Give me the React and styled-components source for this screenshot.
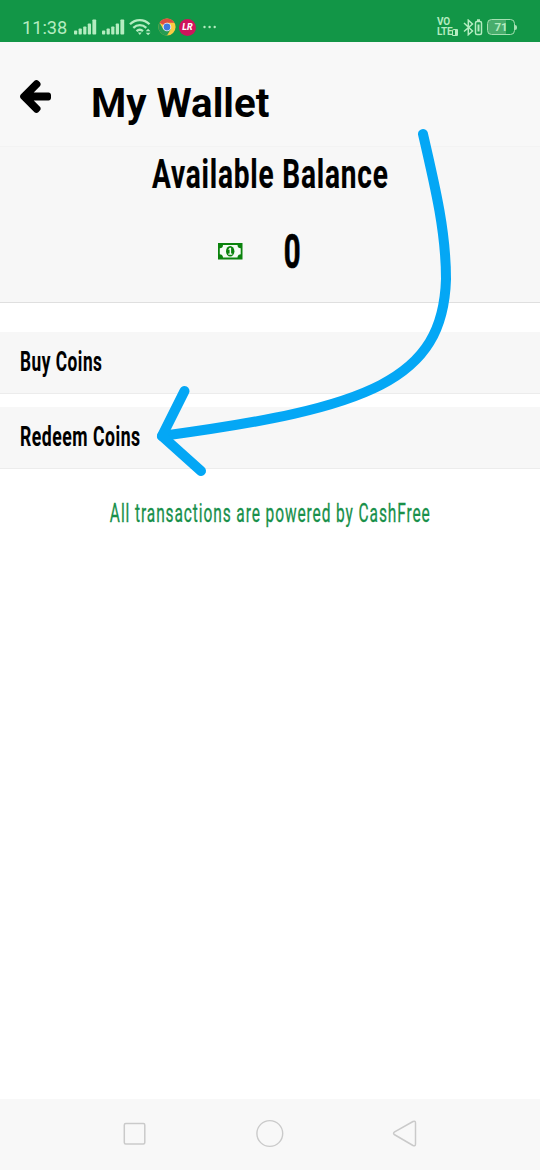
import React from 'react';
import styled, { createGlobalStyle } from 'styled-components';

const GlobalStyle = createGlobalStyle`
  * { box-sizing: border-box; }
  body { margin: 0; background: #fff; font-family: Roboto, sans-serif; color: #000; }
`;

const Screen = styled.div`
  position: relative;
  display: flex;
  flex-direction: column;
  width: 540px;
  height: 1170px;
  overflow: hidden;
  background: #fff;
`;

const StatusBar = styled.div`
  display: flex;
  align-items: flex-start;
  justify-content: space-between;
  height: 42px;
  flex: none;
  padding: 0 23px 0 22px;
  background: #129647;
  color: #b4ecc0;
`;

const StatusGroup = styled.div`
  display: flex;
  align-items: center;
  height: 20px;
  margin-top: 17px;
`;

const Clock = styled.span`
  width: 52px;
  font-size: 18.2px;
  line-height: 20px;
  padding-top: 1px;
`;

const StatusIcon = styled.svg`
  display: block;
  flex: none;
  margin-left: ${(p) => p.$gap || 0}px;
`;

const LrBadge = styled.span`
  display: flex;
  align-items: center;
  justify-content: center;
  width: 17px;
  height: 17px;
  margin-left: 3px;
  border-radius: 50%;
  background: #cf145c;
  color: #fff;
  font-size: 9px;
  font-style: italic;
  font-weight: 800;
`;

const Volte = styled.span`
  display: flex;
  flex-direction: column;
  width: 21px;
  font-size: 10px;
  font-weight: 700;
  line-height: 10px;
  letter-spacing: -0.3px;
`;

const VolteLine = styled.span`
  display: flex;
  align-items: center;
  height: 10px;
`;

const SimTag = styled.span`
  display: inline-block;
  flex: none;
  width: 6px;
  height: 7px;
  border: 1.5px solid #b4ecc0;
  border-right-width: 3px;
  border-radius: 2px 1px 1px 1px;
`;

const Battery = styled.span`
  display: flex;
  align-items: center;
  justify-content: center;
  width: 28px;
  height: 16px;
  margin-left: 4px;
  border: 1.5px solid #a5e0b2;
  border-radius: 4.5px;
  background: linear-gradient(90deg, #48ad6c 68%, transparent 68%);
  font-size: 11.5px;
  font-weight: 700;
`;

const BatteryTip = styled.span`
  width: 2px;
  height: 5px;
  border-radius: 0 2px 2px 0;
  background: #a5e0b2;
`;

const Header = styled.header`
  display: flex;
  align-items: flex-start;
  height: 105px;
  flex: none;
  padding: 38px 20px 0;
  border-bottom: 1px solid #f3f3f3;
  background: #f8f8f8;
`;

const BackIcon = styled.svg`
  display: block;
  width: 31px;
  height: 33px;
  flex: none;
`;

const Title = styled.h1`
  margin: -1px 0 0 40px;
  font-size: 41px;
  font-weight: 700;
  line-height: 48px;
  white-space: nowrap;
  transform: scaleX(0.982);
  transform-origin: left;
`;

const Condensed = styled.span`
  display: block;
  font-size: ${(p) => p.$size}px;
  font-weight: ${(p) => p.$weight || 700};
  line-height: 1;
  letter-spacing: ${(p) => p.$spacing || 0}px;
  white-space: nowrap;
  -webkit-text-stroke: ${(p) => p.$stroke || 0}px currentColor;
  transform: scaleX(${(p) => p.$scale});
  transform-origin: ${(p) => p.$origin || 'center'};
`;

const BalancePanel = styled.section`
  display: flex;
  flex-direction: column;
  align-items: center;
  height: 156px;
  flex: none;
  padding-top: 6px;
  border-bottom: 1.5px solid #dfdfdf;
  background: #f7f7f7;
`;

const BalanceRow = styled.div`
  display: flex;
  align-items: center;
  gap: 35px;
  height: 48px;
  margin-top: 33px;
  padding-right: 16px;
`;

const Menu = styled.nav`
  display: flex;
  flex-direction: column;
  gap: 13px;
  margin-top: 29px;
`;

const MenuItem = styled.div`
  display: flex;
  align-items: center;
  height: 62px;
  padding: 0 20px;
  border-bottom: 1.5px solid #ececec;
  background: #f7f7f7;
`;

const Note = styled.div`
  display: flex;
  justify-content: center;
  margin-top: 32px;
  color: #18904a;
`;

const NavBar = styled.footer`
  display: flex;
  justify-content: center;
  align-items: center;
  gap: 106px;
  height: 71px;
  margin-top: auto;
  flex: none;
  padding-bottom: 2px;
  background: #f8f8f8;
`;

const DrawnArrow = styled.svg`
  position: absolute;
  top: 120px;
  left: 140px;
  pointer-events: none;
`;

function Signal({ gap, heights }) {
  return (
    <StatusIcon $gap={gap} width="23" height="16" viewBox="0 0 23 16" fill="#b4ecc0">
      {heights.map((h, i) => (
        <rect key={i} x={i * 4.6} y={15.5 - h} width={i === heights.length - 1 ? 3.8 : 3.2} height={h} rx="0.8" />
      ))}
    </StatusIcon>
  );
}

function Wifi() {
  return (
    <StatusIcon $gap={4} width="23" height="18" viewBox="0 0 23 18" fill="none" stroke="#b4ecc0" strokeWidth="2.3">
      <path d="M1 6.2C6.5.7 15 .7 20.5 6.2M4.3 9.8c3.8-3.5 9.2-3.5 13 0M7.5 13.1c2-1.7 4.5-1.7 6.5 0" />
      <path d="M8.9 14.5h3.8L10.8 17z" fill="#b4ecc0" stroke="none" />
      <path d="M16.7 13.2l2.4-2.4 2.4 2.4zM16.7 14.7l2.4 2.5 2.4-2.5z" fill="#b4ecc0" stroke="none" />
    </StatusIcon>
  );
}

function Chrome() {
  return (
    <StatusIcon $gap={6} width="18" height="18" viewBox="0 0 18 18">
      <circle cx="9" cy="9" r="8.6" fill="#fbcb43" />
      <path d="M9 9L1.55 4.7A8.6 8.6 0 0 1 16.45 4.7H9z" fill="#dc4e41" />
      <path d="M1.55 4.7A8.6 8.6 0 0 0 9 17.6l3.8-6.5H5.2z" fill="#279b53" />
      <circle cx="9" cy="9" r="4.3" fill="#f2f5f6" />
      <circle cx="9" cy="9" r="3.4" fill="#3f79dd" />
    </StatusIcon>
  );
}

function Money() {
  return (
    <svg width="25" height="17" viewBox="0 0 25 17">
      <rect width="24.5" height="16.5" fill="#0b830d" />
      <path d="M5 2h14.5a3.4 3.4 0 0 0 3.2 3.3v5.9a3.4 3.4 0 0 0-3.2 3.3H5a3.4 3.4 0 0 0-3.2-3.3V5.3A3.4 3.4 0 0 0 5 2z" fill="#f4fbf4" />
      <ellipse cx="12.2" cy="8.3" rx="4.2" ry="5.2" fill="#0b830d" />
      <path d="M10.3 6.2l1.5-1.4h1.3v5.8h1.2v1.2h-4v-1.2h1.3V6.5l-.7.5z" fill="#f4fbf4" />
    </svg>
  );
}

export default function App() {
  return (
    <>
      <GlobalStyle />
      <Screen>
        <StatusBar>
          <StatusGroup>
            <Clock>11:38</Clock>
            <Signal heights={[4, 6, 8, 11, 15]} />
            <Signal gap={5} heights={[4, 6, 8, 11, 15]} />
            <Wifi />
            <Chrome />
            <LrBadge>LR</LrBadge>
            <StatusIcon $gap={7} width="14" height="4" viewBox="0 0 14 4" fill="#b4ecc0">
              <circle cx="1.5" cy="2" r="1.2" />
              <circle cx="6.6" cy="2" r="1.2" />
              <circle cx="11.7" cy="2" r="1.2" />
            </StatusIcon>
          </StatusGroup>
          <StatusGroup>
            <Volte>
              <VolteLine>VO</VolteLine>
              <VolteLine>LTE<SimTag /></VolteLine>
            </Volte>
            <StatusIcon $gap={5} width="20" height="17" viewBox="0 0 20 17" fill="none" stroke="#b4ecc0" strokeWidth="1.5">
              <path d="M1 4l8.5 8-4.2 3.7V1.2L9.5 5 1 12.5" />
              <rect x="12.5" y="2.5" width="6" height="13" rx="1.5" />
              <path d="M14 1.2h3M15.5 5.5v7" strokeWidth="2" />
            </StatusIcon>
            <Battery>71</Battery>
            <BatteryTip />
          </StatusGroup>
        </StatusBar>
        <Header>
          <BackIcon viewBox="64 181 1472 1558" preserveAspectRatio="none">
            <path d="M1536 896v128q0 53-32.5 90.5t-84.5 37.5h-704l293 294q38 36 38 90t-38 90l-75 76q-37 37-90 37-52 0-91-37l-651-652q-37-37-37-90 0-52 37-91l651-650q38-38 91-38 52 0 90 38l75 74q38 38 38 91t-38 91l-293 293h704q52 0 84.5 37.5t32.5 90.5z" />
          </BackIcon>
          <Title>My Wallet</Title>
        </Header>
        <BalancePanel>
          <Condensed $size={41.5} $scale={0.675} $spacing={1.2} $stroke={0.2}>Available Balance</Condensed>
          <BalanceRow>
            <Money />
            <Condensed $size={49} $scale={0.6} $stroke={0.7}>0</Condensed>
          </BalanceRow>
        </BalancePanel>
        <Menu>
          <MenuItem>
            <Condensed $size={27} $scale={0.64} $spacing={0.8} $stroke={0.1} $origin="left">Buy Coins</Condensed>
          </MenuItem>
          <MenuItem>
            <Condensed $size={27} $scale={0.652} $spacing={0.8} $stroke={0.1} $origin="left">Redeem Coins</Condensed>
          </MenuItem>
        </Menu>
        <Note>
          <Condensed $size={25.5} $scale={0.607} $weight={400} $spacing={1.5} $stroke={0.3}>
            All transactions are powered by CashFree
          </Condensed>
        </Note>
        <NavBar>
          <svg width="30" height="30" viewBox="0 0 30 30" fill="none" stroke="#cacaca" strokeWidth="1.5">
            <rect x="5.3" y="4.5" width="20.5" height="20.5" rx="1.5" />
          </svg>
          <svg width="30" height="30" viewBox="0 0 30 30" fill="none" stroke="#cacaca" strokeWidth="1.4">
            <circle cx="14.8" cy="14.5" r="12.9" />
          </svg>
          <svg width="30" height="30" viewBox="0 0 30 30" fill="none" stroke="#cacaca" strokeWidth="1.5" strokeLinejoin="round">
            <path d="M3.2 13.2L22 2.5q2.500-1 2.500 1.500v21q0 2.500-2.500 1.500L3.200 15.500q-1.200-1.100 0-2.300z" />
          </svg>
        </NavBar>
        <DrawnArrow width="330" height="370" viewBox="140 120 330 370" fill="none" stroke="#04a7f5" strokeWidth="10" strokeLinecap="round" strokeLinejoin="round">
          <path d="M423 134C436 190 446 233 446 279C443 380 370 408 162 436" />
          <path d="M184.5 391L162 436L201 471" />
        </DrawnArrow>
      </Screen>
    </>
  );
}
